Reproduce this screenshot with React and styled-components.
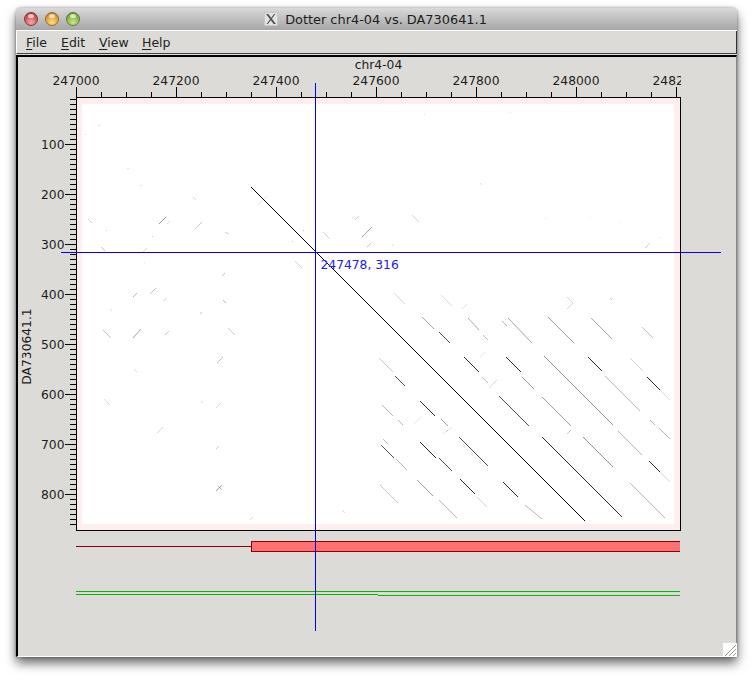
import React from 'react';
import styled, { createGlobalStyle } from 'styled-components';

const GlobalStyle = createGlobalStyle`
  html, body {
    margin: 0;
    padding: 0;
    background: #fff;
  }
`;

const Page = styled.div`
  width: 753px;
  height: 681px;
  padding: 8px 0 0 16px;
  box-sizing: border-box;
  overflow: hidden;
`;

const Window = styled.div`
  width: 721px;
  height: 649px;
  display: flex;
  flex-direction: column;
  position: relative;
  border-radius: 5px 5px 0 0;
  background: #dcdbd7;
  box-shadow: 0 6px 11px rgba(0, 0, 0, 0.6), 0 0 3px rgba(0, 0, 0, 0.4);
`;

const TitleBar = styled.div`
  height: 22px;
  flex: none;
  display: flex;
  align-items: center;
  justify-content: center;
  position: relative;
  border-radius: 5px 5px 0 0;
  background: linear-gradient(#d9d9d9, #a6a6a6);
  border-bottom: 1px solid #fff;
`;

const Lights = styled.div`
  position: absolute;
  left: 8px;
  top: 4px;
  display: flex;
  gap: 7px;
`;

const Light = styled.span`
  width: 14px;
  height: 14px;
  border-radius: 50%;
  position: relative;
  box-sizing: border-box;
  border: 1px solid ${p => p.$rim};
  background: radial-gradient(circle at 50% 80%, ${p => p.$glow} 0, ${p => p.$base} 55%, ${p => p.$rim} 100%);
  &::after {
    content: '';
    position: absolute;
    left: 3px;
    top: 1px;
    width: 6px;
    height: 4px;
    border-radius: 50%;
    background: rgba(255, 255, 255, 0.65);
  }
`;

const TitleGroup = styled.div`
  display: flex;
  align-items: center;
  gap: 7px;
  margin-left: -2px;
`;

const TitleText = styled.span`
  font-family: "DejaVu Sans", sans-serif;
  font-size: 12.9px;
  color: #1c1c1c;
  white-space: nowrap;
`;

const MenuBar = styled.div`
  height: 22px;
  flex: none;
  display: flex;
  align-items: center;
  padding-left: 9px;
  background: #dcdbd7;
  border-left: 1px solid #fff;
  border-right: 1px solid #333;
  border-bottom: 1px solid #444;
`;

const MenuItem = styled.span`
  font-family: "DejaVu Sans", sans-serif;
  font-size: 12.5px;
  color: #222;
  width: ${p => p.$width}px;
  u {
    text-underline-offset: 2px;
  }
`;

const Panel = styled.div`
  flex: 1;
  margin-top: 1px;
  border-top: 2px solid #000;
  border-left: 2px solid #000;
  border-right: 1px solid #888;
  border-bottom: 1px solid #fff;
  min-height: 0;
  background: #dcdbd7;
`;

const Plot = styled.svg`
  display: block;
  font-family: "DejaVu Sans", sans-serif;
  font-size: 12.3px;
`;

const ResizeGrip = styled.svg`
  position: absolute;
  right: 0;
  bottom: 0;
`;

const BLUE = '#0000ff';
const GREEN = '#10b010';

// [x1, y1, x2, y2, opacity] in page pixels
const matches = [
  [422, 317, 434, 329, 0.7], [439, 332, 450, 343, 0.9], [468, 318, 479, 330, 0.7], [483, 335, 488, 340, 0.5],
  [508, 318, 532, 343, 0.75], [502, 321, 507, 326, 0.6], [548, 317, 574, 343, 0.8], [591, 318, 612, 339, 0.7],
  [642, 327, 653, 338, 0.5], [394, 293, 405, 304, 0.3], [441, 295, 452, 306, 0.3],
  [379, 358, 393, 372, 0.45], [395, 376, 405, 386, 0.9], [464, 357, 479, 372, 1], [482, 377, 488, 383, 0.5],
  [506, 357, 521, 372, 1], [522, 377, 534, 389, 0.8], [544, 356, 613, 425, 0.85], [588, 357, 602, 371, 1],
  [605, 376, 640, 411, 0.6], [630, 358, 643, 371, 0.35], [647, 377, 660, 390, 1], [660, 390, 670, 400, 0.3],
  [382, 405, 393, 416, 0.6], [420, 401, 435, 416, 1], [499, 396, 529, 426, 0.9], [542, 397, 571, 426, 0.8],
  [398, 420, 403, 425, 0.6], [441, 419, 448, 426, 0.8], [459, 437, 488, 466, 0.9], [420, 442, 436, 458, 1],
  [439, 458, 452, 471, 0.95], [381, 445, 394, 458, 0.9], [396, 459, 407, 470, 0.6], [383, 439, 388, 444, 0.5],
  [542, 437, 622, 517, 1], [583, 437, 613, 467, 0.85], [618, 431, 642, 455, 0.6], [650, 420, 655, 425, 0.6],
  [659, 428, 670, 439, 0.6], [649, 461, 660, 472, 1], [660, 472, 670, 482, 0.35], [630, 483, 665, 518, 0.6],
  [417, 480, 433, 496, 0.8], [460, 479, 475, 494, 1], [477, 497, 487, 507, 0.35], [503, 482, 518, 497, 1],
  [380, 485, 398, 503, 0.45], [439, 500, 457, 518, 0.6], [525, 505, 542, 519, 0.6],
  // anti-diagonal flecks
  [467, 304, 462, 309, 0.25], [573, 303, 567, 309, 0.35], [567, 297, 573, 303, 0.35], [610, 298, 612, 300, 0.5],
  [485, 352, 480, 357, 0.2], [497, 380, 489, 388, 0.3], [421, 417, 414, 424, 0.2], [452, 427, 443, 434, 0.25],
  [571, 430, 567, 434, 0.4],
  // scattered left of the main diagonal
  [98, 126, 100, 125, 0.3], [127, 168, 129, 169, 0.3], [140, 186, 142, 185, 0.3], [193, 197, 196, 200, 0.3],
  [88, 219, 92, 223, 0.4], [166, 217, 159, 224, 0.85], [170, 221, 167, 224, 0.3], [202, 222, 195, 229, 0.45],
  [106, 231, 107, 230, 0.4], [225, 232, 229, 234, 0.4], [152, 236, 153, 237, 0.4], [101, 247, 105, 251, 0.5],
  [147, 248, 143, 252, 0.35], [144, 263, 145, 263, 0.3], [225, 273, 222, 276, 0.5], [137, 293, 133, 297, 0.6],
  [156, 288, 150, 294, 0.5], [223, 300, 226, 303, 0.6], [167, 298, 163, 301, 0.3], [202, 312, 200, 314, 0.5],
  [110, 309, 112, 311, 0.3], [103, 330, 111, 338, 0.5], [141, 329, 133, 338, 0.75], [169, 331, 165, 335, 0.45],
  [228, 328, 235, 335, 0.4], [223, 357, 217, 363, 0.5], [134, 369, 137, 372, 0.3], [104, 399, 110, 405, 0.3],
  [221, 403, 216, 408, 0.3], [201, 401, 203, 403, 0.3], [163, 427, 157, 433, 0.35], [219, 446, 216, 449, 0.4],
  [222, 485, 216, 491, 0.7], [218, 486, 222, 490, 0.5], [253, 517, 250, 520, 0.3], [342, 510, 345, 513, 0.3],
  [267, 196, 258, 205, 0.25], [303, 230, 304, 231, 0.5], [292, 241, 293, 242, 0.4], [323, 232, 330, 239, 0.35],
  [359, 216, 355, 220, 0.4], [372, 227, 362, 237, 0.75], [371, 243, 367, 247, 0.45], [295, 261, 302, 268, 0.35],
  [412, 215, 419, 222, 0.35], [392, 246, 394, 244, 0.3], [645, 248, 650, 243, 0.4], [424, 114, 425, 115, 0.25],
  [510, 112, 511, 113, 0.25], [480, 183, 482, 185, 0.3], [545, 218, 546, 219, 0.25], [590, 218, 591, 217, 0.25],
  [620, 222, 621, 223, 0.25], [660, 238, 661, 237, 0.3], [352, 217, 353, 218, 0.3], [85, 135, 86, 134, 0.3],
];

const xMajor = [247000, 247200, 247400, 247600, 247800, 248000, 248200];

function Axes() {
  const xMinor = [];
  for (let x = 76.5; x < 680; x += 25) xMinor.push(x);
  const yTicks = [];
  for (let y = 99.5; y <= 525; y += 5) yTicks.push(y);
  return (
    <g>
      <text x="378.5" y="69" textAnchor="middle" fill="#1c1c1c">chr4-04</text>
      <text transform="rotate(-90 30.5 346.5)" x="30.5" y="346.5" textAnchor="middle" fill="#1c1c1c">DA730641.1</text>
      <clipPath id="xlabels"><rect x="18" y="70" width="663" height="20" /></clipPath>
      <g clipPath="url(#xlabels)" fill="#1c1c1c">
        {xMajor.map((v, i) => (
          <text key={v} x={76 + i * 100} y="84.5" textAnchor="middle">{v}</text>
        ))}
      </g>
      <g stroke="#000" strokeWidth="1" shapeRendering="crispEdges">
        {xMinor.map((x, i) => (
          <line key={x} x1={x} x2={x} y1={i % 4 === 0 ? 87 : 92} y2="97" />
        ))}
        {yTicks.map((y, i) => (
          <line key={y} x1={(i - 9) % 10 === 0 ? 65 : 70} x2="76" y1={y} y2={y} />
        ))}
      </g>
      {[100, 200, 300, 400, 500, 600, 700, 800].map((v, i) => (
        <text key={v} x="64.5" y={149 + i * 50} textAnchor="end" fill="#1c1c1c">{v}</text>
      ))}
    </g>
  );
}

function DotPlot() {
  return (
    <g>
      <rect x="76.5" y="97.5" width="604" height="433" fill="#ffeeee" stroke="#000" shapeRendering="crispEdges" />
      <rect x="82" y="104" width="592" height="420" fill="#fff" />
      <g stroke="#000" strokeWidth="1">
        <line x1="251" y1="187" x2="585" y2="521" shapeRendering="crispEdges" />
        {matches.map(([x1, y1, x2, y2, o], i) => (
          o >= 0.9
            ? <line key={i} x1={x1} y1={y1} x2={x2} y2={y2} strokeOpacity={o === 1 ? 0.85 : 0.7} shapeRendering="crispEdges" />
            : <line key={i} x1={x1} y1={y1} x2={x2} y2={y2} strokeOpacity={o * 0.7} strokeWidth="0.7" />
        ))}
      </g>
    </g>
  );
}

function Tracks() {
  return (
    <g>
      <rect x="76" y="546" width="175" height="1" fill="#8b0000" />
      <rect x="251" y="541" width="429" height="11" fill="#8b0000" />
      <rect x="252" y="542" width="428" height="9" fill="#ff7070" />
      <rect x="76" y="591" width="604" height="1" fill={GREEN} />
      <rect x="76" y="594" width="302" height="1" fill={GREEN} />
      <rect x="378" y="595" width="302" height="1" fill={GREEN} />
    </g>
  );
}

function Crosshair() {
  return (
    <g>
      <rect x="315" y="83" width="1" height="548" fill={BLUE} />
      <rect x="61" y="252" width="660" height="1" fill={BLUE} />
      <text x="320.5" y="269" fill="#2020f0">247478, 316</text>
    </g>
  );
}

function App() {
  return (
    <Page>
      <GlobalStyle />
      <Window>
        <TitleBar>
          <Lights>
            <Light $rim="#8c3030" $base="#d65a5a" $glow="#f4aaaa" />
            <Light $rim="#9a6a20" $base="#e2a640" $glow="#fbdd88" />
            <Light $rim="#5a7f2c" $base="#8fba50" $glow="#c8e68c" />
          </Lights>
          <TitleGroup>
            <svg width="14" height="14" viewBox="0 0 14 14">
              <rect width="14" height="14" fill="#e4e4e4" stroke="#aaa" />
              <path d="M2 2h2.4L12 12H9.6ZM10 2H11.4L4 12H2.6Z" fill="#555" />
            </svg>
            <TitleText>Dotter chr4-04 vs. DA730641.1</TitleText>
          </TitleGroup>
        </TitleBar>
        <MenuBar>
          <MenuItem $width={35}><u>F</u>ile</MenuItem>
          <MenuItem $width={38}><u>E</u>dit</MenuItem>
          <MenuItem $width={43}><u>V</u>iew</MenuItem>
          <MenuItem $width={40}><u>H</u>elp</MenuItem>
        </MenuBar>
        <Panel>
          <Plot width="718" height="598" viewBox="18 57 718 598">
            <Axes />
            <DotPlot />
            <Tracks />
            <Crosshair />
          </Plot>
        </Panel>
        <ResizeGrip width="14" height="14" viewBox="0 0 14 14">
          <rect width="14" height="14" fill="#fff" />
          <path d="M2 13 13 2M6 13 13 6M10 13 13 10" stroke="#999" strokeWidth="1" />
        </ResizeGrip>
      </Window>
    </Page>
  );
}

export default App;
